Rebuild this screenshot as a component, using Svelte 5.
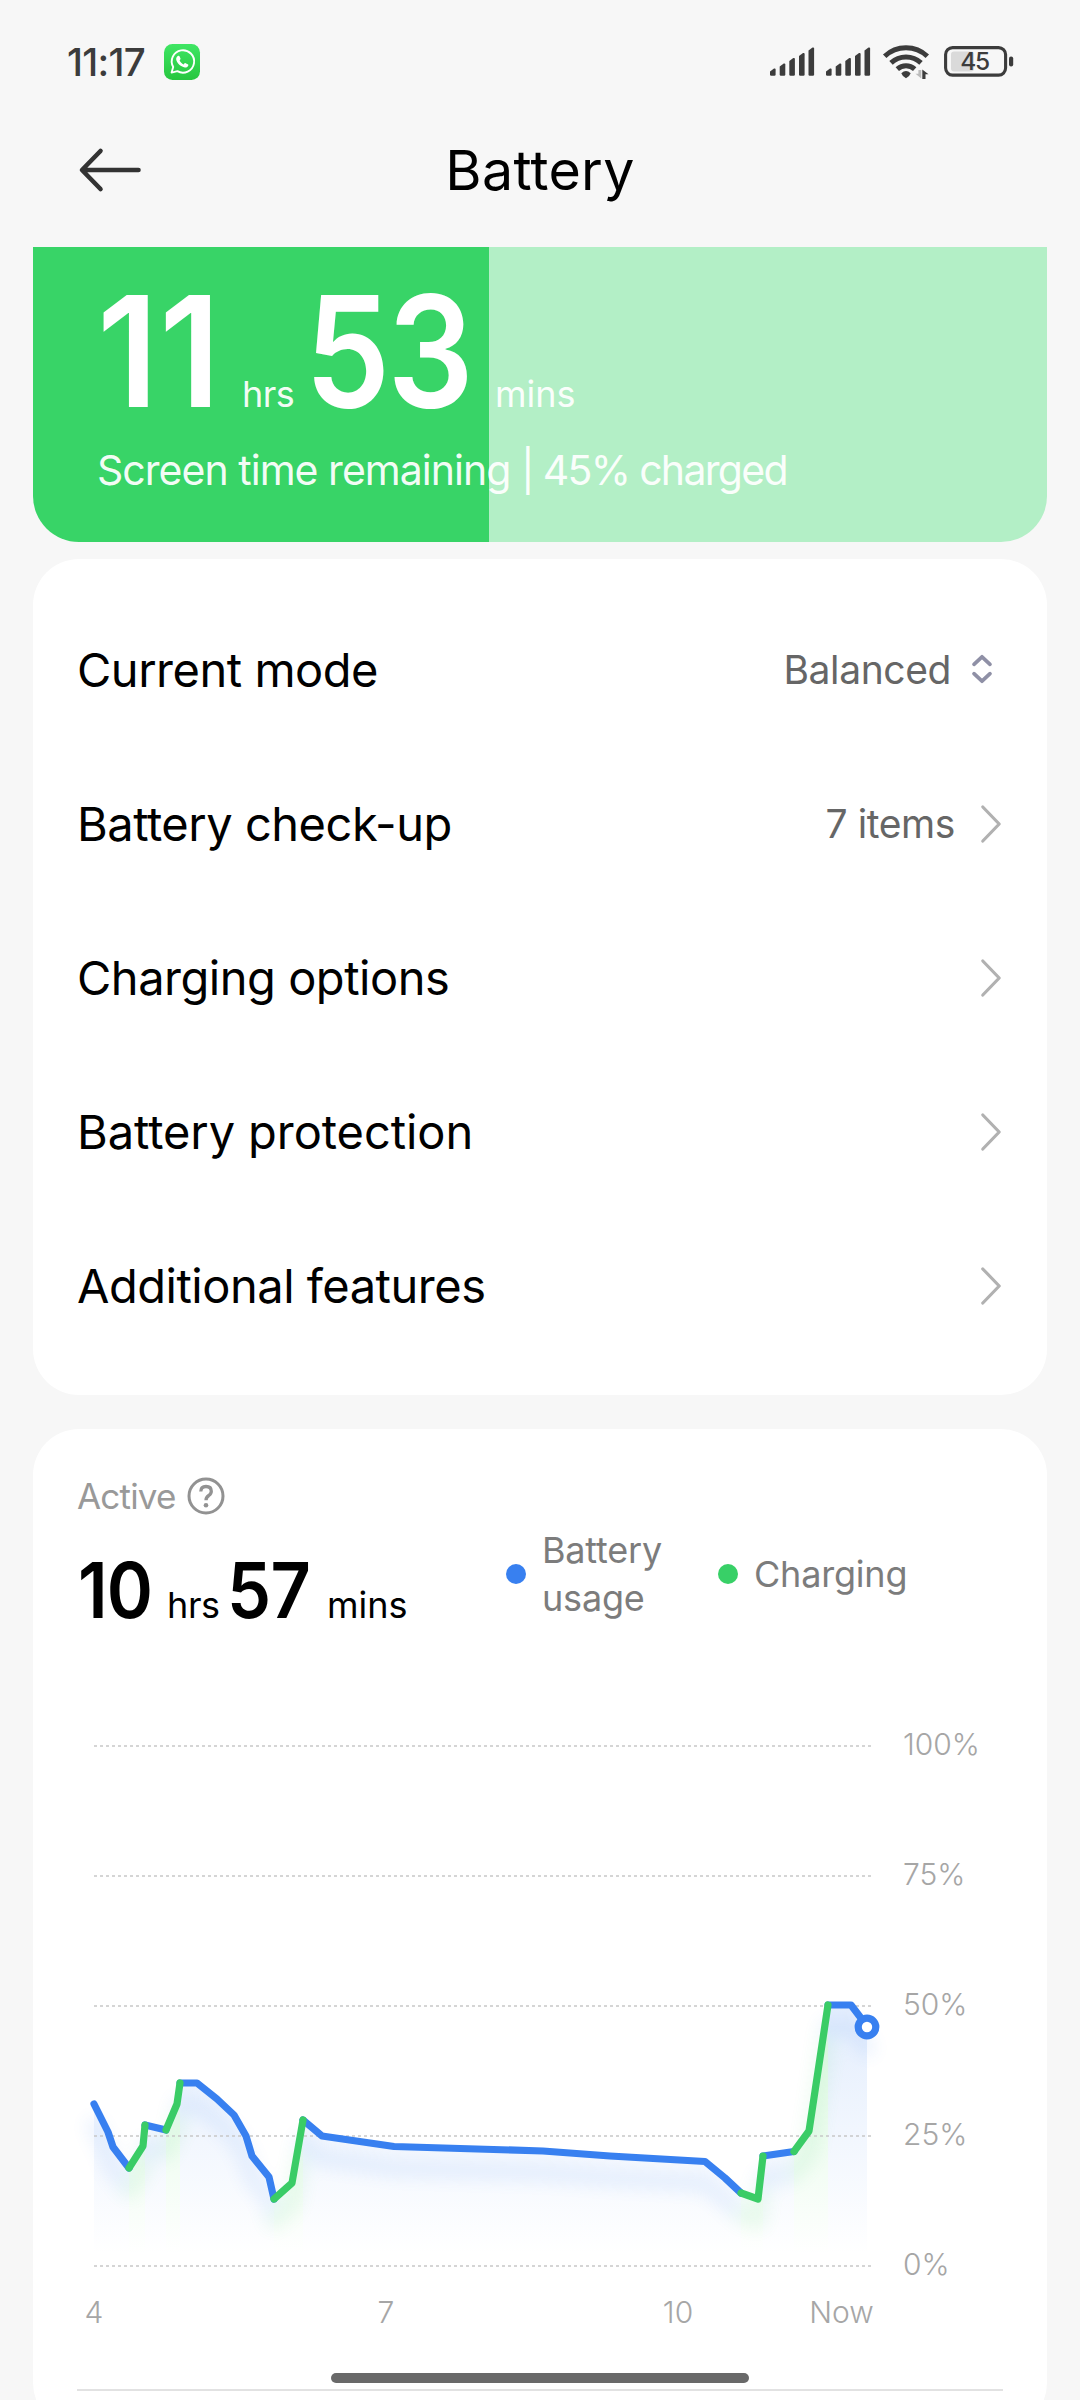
<script>
  const rows = [
    { label: 'Current mode', value: 'Balanced', icon: 'select', cls: 'snug' },
    { label: 'Battery check-up', value: '7 items', icon: 'chevron', cls: 'snug' },
    { label: 'Charging options', icon: 'chevron', cls: 'snug' },
    { label: 'Battery protection', icon: 'chevron', cls: 'even' },
    { label: 'Additional features', icon: 'chevron', cls: 'snug' }
  ];

  const bars = [
    [0, 21], [9.7, 16], [19.3, 10.5], [29, 5.5], [38.5, 0]
  ];

  // Battery level over time, split where the phone was plugged in or out.
  const segments = [
    { kind: 'use', pts: [[61, 374], [75, 402], [80, 417], [96, 438]] },
    { kind: 'charge', pts: [[96, 438], [110, 416], [112, 395]] },
    { kind: 'use', pts: [[112, 395], [133, 400]] },
    { kind: 'charge', pts: [[133, 400], [144, 374], [147, 353]] },
    { kind: 'use', pts: [[147, 353], [164, 353], [184, 369], [201, 385], [213, 406], [219, 426], [236, 447], [241, 469]] },
    { kind: 'charge', pts: [[241, 469], [259, 453], [270, 390]] },
    { kind: 'use', pts: [[270, 390], [289, 406], [361, 416.5], [510, 421], [577, 426], [672, 431.5], [692, 448], [708, 463]] },
    { kind: 'charge', pts: [[708, 463], [725, 469], [730, 426]] },
    { kind: 'use', pts: [[730, 426], [761, 421.5]] },
    { kind: 'charge', pts: [[761, 421.5], [776, 401], [795, 275]] },
    { kind: 'use', pts: [[795, 275], [818, 275], [834, 296]] }
  ];
  const line = (pts) => pts.map((p) => p.join(',')).join(' ');
  const area = (pts) => `${pts[0][0]},536 ${line(pts)} ${pts[pts.length - 1][0]},536`;
  const ordered = [...segments].sort((a, b) => (a.kind === 'use' ? 0 : 1) - (b.kind === 'use' ? 0 : 1));

  const levels = [
    ['100%', 16], ['75%', 146], ['50%', 276], ['25%', 406], ['0%', 536]
  ];
  const hours = [['4', 61], ['7', 353], ['10', 645], ['Now', 808.5]];
</script>

<div class="screen">
  <header class="status">
    <div class="status-left">
      <span class="clock">11:17</span>
      <svg class="wa" viewBox="0 0 36 36">
        <defs>
          <linearGradient id="wag" x1="0" y1="0" x2="0" y2="1">
            <stop offset="0" stop-color="#3fe664" /><stop offset="1" stop-color="#27c63f" />
          </linearGradient>
        </defs>
        <rect width="36" height="36" rx="8.5" fill="url(#wag)" />
        <path d="M7.6 28.6 9.2 23A11.2 11.2 0 1 1 13.4 27.2Z" fill="none" stroke="#fff" stroke-width="1.9" stroke-linejoin="round" />
        <path d="M13.7 12.1c.7-.6 1.5-.5 1.8.2l1 2.3c.2.6-.1 1-.9 1.9.9 1.9 2.2 3.1 4.1 3.9.9-1.1 1.3-1.5 1.9-1.2l2.1 1c.7.3.8.8.5 1.6-.6 1.4-2 1.9-3.3 1.7-4.500-.8-8.200-4.400-8.700-7.900-.2-1.400.500-2.700 1.500-3.500z" fill="#fff" />
      </svg>
    </div>
    <div class="status-right">
      {#each [0, 1] as n (n)}
        <svg class="signal" viewBox="0 0 44 29">
          {#each bars as [x, y]}
            <path d="M{x} {y + 3.6}L{x + 4} {y + 0.6}Q{x + 5.6} {y} {x + 5.6} {y + 1.5}V27.500Q{x + 5.6} 28.700 {x + 4.4} 28.700H{x + 1.2}Q{x} 28.700 {x} 27.500Z" fill="#3c3c3c" />
          {/each}
        </svg>
      {/each}
      <svg class="wifi" viewBox="0 0 47 36">
        <g fill="none" stroke="#3c3c3c" stroke-width="5">
          <path d="M1.700 12.300A31 31 0 0 1 44.300 12.300" />
          <path d="M8 18.900A22 22 0 0 1 38 18.900" />
          <path d="M14.300 25.200A13 13 0 0 1 31.700 25.200" />
        </g>
        <path d="M18.300 29.300Q23 24.500 27.700 29.300Q27 32 23 34.200Q19 32 18.300 29.300Z" fill="#3c3c3c" />
        <path d="M38.300 26V34.500L32.500 29.800H35.400V26Z" fill="#bcbcbc" />
        <path d="M39.300 35V25.500L45.500 30.200H42.500V35Z" fill="#3c3c3c" />
      </svg>
      <svg class="batt" viewBox="0 0 70 31">
        <rect x="7" y="5.500" width="23" height="20" rx="3" fill="#dadada" />
        <rect x="1.600" y="1.600" width="60" height="27.500" rx="7" fill="none" stroke="#3c3c3c" stroke-width="3.100" />
        <rect x="65" y="10.500" width="4.200" height="10" rx="2" fill="#3c3c3c" />
        <text x="30.500" y="24.200" text-anchor="middle" class="batt-num">45</text>
      </svg>
    </div>
  </header>

  <nav class="bar">
    <svg class="back" viewBox="0 0 64 48">
      <path d="M60.500 24H5M22.500 5L4 24L22.500 43" fill="none" stroke="#333" stroke-width="4.600" stroke-linecap="round" stroke-linejoin="round" />
    </svg>
    <h1>Battery</h1>
  </nav>

  <section class="banner">
    <div class="remain">
      <span class="big b1">11</span><span class="unit u1">hrs</span><span class="big b2">53</span><span class="unit u2">mins</span>
    </div>
    <div class="caption">Screen time remaining <span class="charged">| 45% charged</span></div>
  </section>

  <section class="card menu">
    {#each rows as row}
      <div class="row">
        <span class="label {row.cls}">{row.label}</span>
        {#if row.value}<span class="value">{row.value}</span>{/if}
        {#if row.icon === 'select'}
          <svg class="select" viewBox="0 0 20 30">
            <path d="M2 10.300L10 2.800L18 10.300M2 19.700L10 27.200L18 19.700" fill="none" stroke="#8f90a6" stroke-width="3.700" stroke-linecap="round" stroke-linejoin="round" />
          </svg>
        {:else}
          <svg class="chev" viewBox="0 0 20 38">
            <path d="M1.800 2L18.200 19L1.800 36" fill="none" stroke="#b1b1b1" stroke-width="3.200" stroke-linecap="round" stroke-linejoin="round" />
          </svg>
        {/if}
      </div>
    {/each}
  </section>

  <section class="card usage">
    <div class="active">
      <span class="active-label">Active</span>
      <svg class="help" viewBox="0 0 38 38">
        <circle cx="19" cy="19" r="17" fill="none" stroke="#929292" stroke-width="3" />
        <path d="M13.800 14.500Q13.800 9.500 19 9.500Q24.300 9.500 24.300 14.300Q24.300 16.800 21.800 18.500Q19 20.300 19 23.300" fill="none" stroke="#929292" stroke-width="3.300" />
        <circle cx="19" cy="28.300" r="2.300" fill="#929292" />
      </svg>
    </div>
    <div class="summary">
      <div class="total">
        <span class="num n1">10</span><span class="sunit s1">hrs</span><span class="num n2">57</span><span class="sunit s2">mins</span>
      </div>
      <div class="legend">
        <i class="dot blue"></i><span class="lg lg1">Battery<br />usage</span>
        <i class="dot green"></i><span class="lg lg2">Charging</span>
      </div>
    </div>

    <svg class="chart" viewBox="0 0 1014 640">
      <defs>
        <linearGradient id="gUse" gradientUnits="userSpaceOnUse" x1="0" y1="275" x2="0" y2="525">
          <stop offset="0" stop-color="#3880f0" stop-opacity="0.14" />
          <stop offset="0.5" stop-color="#3880f0" stop-opacity="0.07" />
          <stop offset="1" stop-color="#3880f0" stop-opacity="0" />
        </linearGradient>
        <linearGradient id="gCharge" gradientUnits="userSpaceOnUse" x1="0" y1="275" x2="0" y2="525">
          <stop offset="0" stop-color="#38dd50" stop-opacity="0.16" />
          <stop offset="0.5" stop-color="#38dd50" stop-opacity="0.09" />
          <stop offset="1" stop-color="#38dd50" stop-opacity="0" />
        </linearGradient>
        <filter id="soft" filterUnits="userSpaceOnUse" x="0" y="200" width="900" height="400">
          <feGaussianBlur stdDeviation="8" />
        </filter>
      </defs>
      {#each segments as s}
        <polygon points={area(s.pts)} class="area {s.kind}" />
      {/each}
      <g filter="url(#soft)" transform="translate(0 22)" opacity="0.085">
        {#each segments as s}
          <polyline points={line(s.pts)} class="glow {s.kind}" />
        {/each}
      </g>
      {#each levels as [name, y]}
        <line x1="61" x2="838" y1={y} y2={y} class="grid" />
        <text x="870" y={y + 9} class="axis">{name}</text>
      {/each}
      {#each ordered as s}
        <polyline points={line(s.pts)} class="curve {s.kind}" />
      {/each}
      <circle cx="834" cy="297" r="8.800" fill="#fff" stroke="#3880f0" stroke-width="7.200" />
      {#each hours as [name, x]}
        <text {x} y="593" text-anchor="middle" class="axis">{name}</text>
      {/each}
    </svg>
    <hr />
  </section>
  <div class="home"></div>
</div>

<style>
  :global(body) { background: #f7f7f7; }
  .screen {
    position: relative;
    width: 1080px;
    height: 2400px;
    overflow: hidden;
    background: #f7f7f7;
    color: #000;
    font-family: Inter, Roboto, "Liberation Sans", sans-serif;
    white-space: nowrap;
  }
  svg { display: block; flex: none; overflow: visible; }

  .status { display: flex; justify-content: space-between; align-items: center; height: 123px; padding: 0 66px 0 67px; box-sizing: border-box; }
  .status-left, .status-right { display: flex; align-items: center; }
  .clock { width: 97px; font-size: 38.500px; line-height: 44px; font-weight: 500; color: #3c3c3c; letter-spacing: -0.7px; }
  .wa { width: 36px; height: 36px; }
  .signal { width: 44px; height: 29px; margin-right: 12px; }
  .signal + .wifi { margin-left: 1px; }
  .wifi { width: 47px; height: 36px; margin-right: 14px; }
  .batt { width: 70px; height: 31px; }
  .batt-num { font-size: 24.500px; font-weight: 500; fill: #3c3c3c; letter-spacing: -1.300px; }

  .bar { display: grid; grid-template-columns: 64px 1fr 64px; align-items: center; height: 94px; padding: 0 78px; margin-bottom: 30px; }
  .back { width: 64px; height: 48px; }
  h1 { margin: 0; text-align: center; font-size: 55.500px; line-height: 70px; font-weight: 400; letter-spacing: 0.3px; }

  .banner {
    box-sizing: border-box;
    height: 295px;
    margin: 0 33px 17px;
    padding: 27px 0 0 64px;
    border-radius: 0 0 46px 46px;
    background: linear-gradient(90deg, #38d467 45%, #b3efc6 45%);
    color: #fff;
  }
  .remain { display: flex; align-items: baseline; height: 154px; }
  .remain span { flex: none; }
  .big { font-size: 154px; line-height: 154px; font-weight: 600; transform-origin: left center; }
  .b1 { width: 145px; letter-spacing: 1px; transform: scaleX(0.94); }
  .b2 { width: 190px; letter-spacing: -3px; transform: scaleX(0.88); }
  .unit { font-size: 36px; line-height: 1; color: rgba(255, 255, 255, 0.95); }
  .u1 { width: 63px; letter-spacing: -0.6px; }
  .caption { margin-top: 11.500px; font-size: 41px; line-height: 60px; color: rgba(255, 255, 255, 0.95); letter-spacing: -0.970px; }
  .charged { letter-spacing: -1.700px; }

  .card { margin: 0 33px; background: #fff; box-sizing: border-box; border-radius: 46px; }
  .menu { height: 836px; padding: 34px 46px 0 44px; margin-bottom: 34px; }
  .row { display: flex; align-items: center; height: 154px; }
  .label { flex: 1; font-size: 47px; line-height: 60px; }
  .snug { letter-spacing: -0.480px; }
  .even { letter-spacing: -0.080px; }
  .value { font-size: 39px; line-height: 50px; color: #666; letter-spacing: -0.4px; }
  .select { width: 20px; height: 30px; margin: -2px 9px 0 21px; }
  .chev { width: 20px; height: 38px; margin: -1px 0 0 26px; }

  .usage { height: 1000px; padding-top: 46px; }
  .active { display: flex; align-items: center; height: 42px; padding-left: 44px; }
  .active-label { width: 110px; font-size: 35px; line-height: 42px; color: #999; letter-spacing: -0.800px; }
  .help { width: 38px; height: 38px; }
  .summary { display: flex; height: 130px; padding-left: 45px; }
  .total { display: flex; align-items: baseline; width: 428px; padding-top: 35px; }
  .total span { flex: none; }
  .num { font-size: 77px; line-height: 77px; font-weight: 600; transform-origin: left center; transform: scaleX(0.91); }
  .n1 { width: 89px; letter-spacing: -1px; }
  .n2 { width: 100px; letter-spacing: -0.500px; }
  .s1 { width: 60px; letter-spacing: -0.400px; }
  .sunit { font-size: 36px; line-height: 1; }
  .legend { display: flex; align-items: center; height: 96px; padding-top: 9px; color: #7c7c7c; font-size: 36px; line-height: 48px; letter-spacing: -0.200px; }
  .dot { flex: none; width: 20px; height: 20px; border-radius: 50%; }
  .blue { background: #3880f0; }
  .green { background: #38d067; }
  .lg1 { width: 176px; margin-left: 16px; }
  .lg2 { margin-left: 16px; }

  .chart { width: 1014px; height: 640px; margin-top: 83px; }
  .area.use { fill: url(#gUse); }
  .area.charge { fill: url(#gCharge); }
  .glow, .curve { fill: none; stroke-linejoin: round; stroke-linecap: round; }
  .glow { stroke-width: 18; }
  .curve { stroke-width: 7.200; }
  .glow.use, .curve.use { stroke: #3880f0; }
  .glow.charge, .curve.charge { stroke: #3acc66; }
  .grid { stroke: #c8c8c8; stroke-width: 1.500; stroke-dasharray: 3 3; }
  .axis { font-size: 30px; font-weight: 300; fill: #a6a6a6; }
  hr { height: 2px; margin: 19px 44px 0; border: 0; background: #e2e2e2; }
  .home { position: absolute; left: 331px; top: 2373px; width: 418px; height: 10px; border-radius: 5px; background: #696969; }
</style>
